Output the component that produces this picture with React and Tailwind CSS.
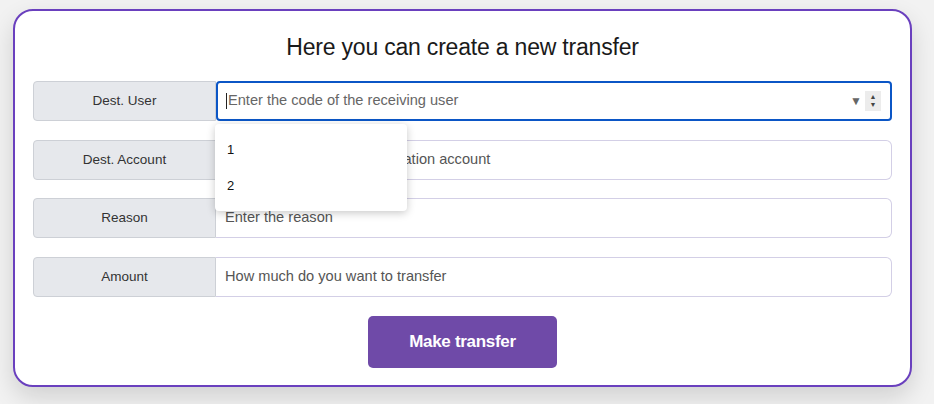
import React from "react";

const rows = [
    { label: "Dest. Account", placeholder: "Enter the code of the destination account" },
    { label: "Reason", placeholder: "Enter the reason" },
    { label: "Amount", placeholder: "How much do you want to transfer" },
];

function Label({ children }) {
    return (
        <div className="w-[183px] shrink-0 flex items-center justify-center bg-[#e6e8ec] border border-[#cdd0d6] rounded-l-[4px] text-[13.5px] text-[#333]">
            {children}
        </div>
    );
}

export default function App() {
    return (
        <div
            className="min-h-screen w-full bg-[#f2f2f2] pt-[9px] pl-[13px]"
            style={{ fontFamily: '"Liberation Sans", Arial, sans-serif' }}
        >
            <div className="w-[899px] h-[378px] bg-white border-2 border-[#6a40be] rounded-[20px] shadow-[0_10px_24px_rgba(0,0,0,0.14)] px-[18px] pt-[22px] pb-[18px] flex flex-col">
                <h1 className="text-center text-[23px] leading-[28px] font-medium text-[#1a1a1a] tracking-[-0.2px]">
                    Here you can create a new transfer
                </h1>

                <div className="mt-[20px] flex flex-col gap-[18.7px]">
                    <div className="relative flex h-10">
                        <Label>Dest. User</Label>
                        <div className="flex-1 flex items-center border-2 border-[#0b56c6] rounded-[4px] pl-[8px] pr-[9px]">
                            <span className="w-px h-[16px] bg-[#222] mr-px" />
                            <span className="flex-1 text-[14.6px] text-[#666]">Enter the code of the receiving user</span>
                            <span className="text-[12px] text-[#666] mr-[3px]">▼</span>
                            <span className="flex flex-col items-center justify-center w-[16px] h-[20px] bg-[#ececec] text-[7px] leading-[8px] text-[#444]">
                                <span>▲</span>
                                <span>▼</span>
                            </span>
                        </div>
                        <div className="absolute left-[182px] top-[43px] w-[192px] h-[87px] bg-white rounded-[4px] shadow-[0_2px_8px_rgba(0,0,0,0.22)] z-10 flex flex-col pl-[12px] pt-[19px] gap-[22px] text-[13px] text-[#111]">
                            <span className="leading-[14px]">1</span>
                            <span className="leading-[14px]">2</span>
                        </div>
                    </div>

                    {rows.map((row) => (
                        <div key={row.label} className="flex h-10">
                            <Label>{row.label}</Label>
                            <div className="flex-1 flex items-center border border-l-0 border-[#d3cfe6] rounded-r-[6px] pl-[9px] text-[14.6px] text-[#555]">
                                {row.placeholder}
                            </div>
                        </div>
                    ))}
                </div>

                <div className="mt-[19px] flex justify-center">
                    <button className="w-[189px] h-[52px] bg-[#6f4aa8] rounded-[5px] text-white font-bold text-[17px] tracking-[-0.3px]">
                        Make transfer
                    </button>
                </div>
            </div>
        </div>
    );
}
